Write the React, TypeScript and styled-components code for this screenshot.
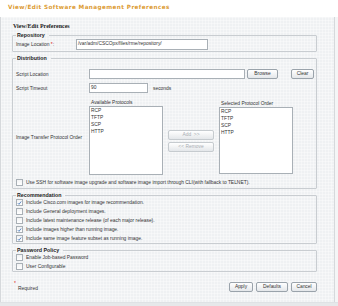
import React from "react";
import styled, { createGlobalStyle } from "styled-components";

const Global = createGlobalStyle`
  html, body { margin: 0; padding: 0; background: #ffffff; }
  body { width: 338px; height: 306px; overflow: hidden; font-family: "Liberation Sans", Arial, sans-serif; }
  * { box-sizing: border-box; }
`;

const FS = "4.9px";

const Page = styled.div`
  width: 338px;
  height: 306px;
  display: flex;
  flex-direction: column;
  background: #f4f5f6;
`;

const TitleBar = styled.div`
  height: 17px;
  padding: 3px 0 0 8px;
  background: #ffffff;
  color: #dc9b33;
  font-family: "DejaVu Sans", Verdana, sans-serif;
  font-weight: bold;
  font-size: 5.7px;
  letter-spacing: 0.4px;
  line-height: 8px;
`;

const Panel = styled.div`
  width: 335px;
  height: 285px;
  border-left: 1px solid #d6d9dc;
  border-right: 1px solid #d6d9dc;
  background-color: #eff1f3;
  background-image:
    linear-gradient(rgba(255,255,255,0.35) 1px, transparent 1px),
    linear-gradient(90deg, rgba(255,255,255,0.35) 1px, transparent 1px);
  background-size: 3px 3px;
  padding: 5px 17px 0 11px;
  display: flex;
  flex-direction: column;
`;

const Heading = styled.div`
  font-family: "Liberation Serif", "Times New Roman", serif;
  font-weight: bold;
  font-size: 6px;
  line-height: 8px;
  color: #222;
  padding-left: 1px;
`;

const Group = styled.fieldset<{ $mt?: number }>`
  margin: ${(p) => p.$mt ?? 0}px 0 0 0;
  padding: 0 2px 0 3px;
  border: 1px solid #c9cdd1;
  border-radius: 1px;
  min-width: 0;
`;

const Legend = styled.legend`
  padding: 0 4px 0 1px;
  margin-left: 0;
  font-weight: bold;
  font-size: 5.3px;
  line-height: 6px;
  color: #222;
`;

const Row = styled.div<{ $h?: number }>`
  display: flex;
  align-items: center;
  height: ${(p) => p.$h ?? 10}px;
`;

const Label = styled.span<{ $w?: number }>`
  width: ${(p) => p.$w ?? 73}px;
  flex-shrink: 0;
  font-size: ${FS};
  color: #333;
  white-space: nowrap;
`;

const Req = styled.span`
  color: #d22;
`;

const Input = styled.div<{ $w: number; $h?: number }>`
  width: ${(p) => p.$w}px;
  height: ${(p) => p.$h ?? 10}px;
  border: 1px solid #a9b0b6;
  background: #ffffff;
  font-size: ${FS};
  color: #333;
  padding: 1px 1px;
  line-height: 6px;
  white-space: nowrap;
  overflow: hidden;
`;

const Button = styled.div<{ $w: number; $disabled?: boolean }>`
  width: ${(p) => p.$w}px;
  height: 10px;
  border: 1px solid ${(p) => (p.$disabled ? "#c6cbcf" : "#9aa3ab")};
  border-radius: 2px;
  background: linear-gradient(#ffffff, #e4e7ea);
  font-size: ${FS};
  line-height: 8px;
  text-align: center;
  color: ${(p) => (p.$disabled ? "#a9aeb3" : "#333")};
  white-space: nowrap;
  flex-shrink: 0;
`;

const Small = styled.span`
  font-size: ${FS};
  color: #333;
`;

const ProtoRow = styled.div`
  display: flex;
  align-items: center;
  margin-top: 6px;
`;

const ListCol = styled.div`
  display: flex;
  flex-direction: column;
`;

const ListTitle = styled.div`
  font-size: ${FS};
  line-height: 7px;
  color: #333;
  padding-left: 2px;
`;

const ListBox = styled.div<{ $h: number }>`
  width: 74px;
  height: ${(p) => p.$h}px;
  border: 1px solid #a9b0b6;
  background: #ffffff;
  padding: 0 1px;
`;

const ListItem = styled.div`
  font-size: ${FS};
  line-height: 7px;
  color: #333;
`;

const ButtonStack = styled.div`
  display: flex;
  flex-direction: column;
  gap: 2px;
  margin: 0 5px;
  padding-top: 8px;
`;

const Check = styled.div`
  display: flex;
  align-items: center;
  height: 9px;
  font-size: ${FS};
  color: #333;
  white-space: nowrap;
`;

const Box = styled.span`
  width: 7px;
  height: 7px;
  border: 1px solid #a9b0b6;
  background: linear-gradient(#f2f3f4, #ffffff);
  margin-right: 3px;
  display: inline-flex;
  align-items: center;
  justify-content: center;
  flex-shrink: 0;
`;

const Footer = styled.div`
  display: flex;
  align-items: flex-start;
  margin-top: 9px;
`;

const RequiredNote = styled.div`
  display: flex;
  flex-direction: column;
  padding-left: 2px;
  font-size: ${FS};
  color: #333;
  line-height: 5px;
`;

const Spacer = styled.div`
  flex: 1;
`;

const FooterButtons = styled.div`
  display: flex;
  gap: 3px;
  margin-top: 1px;
`;

const BottomBar = styled.div`
  height: 4px;
  background: #e6e8ea;
  border-top: 1px solid #dfe2e5;
`;

const CheckItem: React.FC<{ checked?: boolean; children: React.ReactNode }> = ({ checked, children }) => (
  <Check>
    <Box>
      {checked && (
        <svg width="6" height="6" viewBox="0 0 6 6">
          <path d="M1 3.2 L2.4 4.6 L5 1.2" stroke="#3b6fb6" strokeWidth="1" fill="none" />
        </svg>
      )}
    </Box>
    {children}
  </Check>
);

const protocols = ["RCP", "TFTP", "SCP", "HTTP"];

export default function App() {
  return (
    <>
      <Global />
      <Page>
        <TitleBar>View/Edit Software Management Preferences</TitleBar>
        <Panel>
          <Heading>View/Edit Preferences</Heading>
          <Group $mt={2}>
            <Legend>Repository</Legend>
            <Row $h={13}>
              <Label $w={60}>
                Image Location <Req>*</Req>:
              </Label>
              <Input $w={132} $h={11}>/var/adm/CSCOpx/files/rme/repository/</Input>
            </Row>
          </Group>
          <Group $mt={3}>
            <Legend>Distribution</Legend>
            <Row $h={10} style={{ marginTop: 8 }}>
              <Label>Script Location</Label>
              <Input $w={159} />
              <Button $w={31} style={{ marginLeft: 2 }}>Browse</Button>
              <Button $w={23} style={{ marginLeft: 13 }}>Clear</Button>
            </Row>
            <Row $h={10} style={{ marginTop: 4 }}>
              <Label>Script Timeout</Label>
              <Input $w={59}>90</Input>
              <Small style={{ marginLeft: 5 }}>seconds</Small>
            </Row>
            <ProtoRow>
              <Label>Image Transfer Protocol Order</Label>
              <ListCol>
                <ListTitle>Available Protocols</ListTitle>
                <ListBox $h={69}>
                  {protocols.map((p) => (
                    <ListItem key={p}>{p}</ListItem>
                  ))}
                </ListBox>
              </ListCol>
              <ButtonStack>
                <Button $w={46} $disabled>Add &nbsp;&gt;&gt;</Button>
                <Button $w={46} $disabled>&lt;&lt; Remove</Button>
              </ButtonStack>
              <ListCol>
                <ListTitle>Selected Protocol Order</ListTitle>
                <ListBox $h={67}>
                  {protocols.map((p) => (
                    <ListItem key={p}>{p}</ListItem>
                  ))}
                </ListBox>
              </ListCol>
            </ProtoRow>
            <div style={{ marginTop: 3, marginBottom: 1 }}>
              <CheckItem>
                Use SSH for software image upgrade and software image import through CLI(with fallback to TELNET).
              </CheckItem>
            </div>
          </Group>
          <Group $mt={3}>
            <Legend>Recommendation</Legend>
            <CheckItem checked>Include Cisco.com images for image recommendation.</CheckItem>
            <CheckItem>Include General deployment images.</CheckItem>
            <CheckItem>Include latest maintenance release (of each major release).</CheckItem>
            <CheckItem checked>Include images higher than running image.</CheckItem>
            <CheckItem checked>Include same image feature subset as running image.</CheckItem>
          </Group>
          <Group $mt={3}>
            <Legend>Password Policy</Legend>
            <CheckItem>Enable Job-based Password</CheckItem>
            <CheckItem>User Configurable</CheckItem>
          </Group>
          <Footer>
            <RequiredNote>
              <Req>*</Req>
              <span style={{ paddingLeft: 4 }}>Required</span>
            </RequiredNote>
            <Spacer />
            <FooterButtons>
              <Button $w={24}>Apply</Button>
              <Button $w={32}>Defaults</Button>
              <Button $w={26}>Cancel</Button>
            </FooterButtons>
          </Footer>
        </Panel>
        <BottomBar />
      </Page>
    </>
  );
}
